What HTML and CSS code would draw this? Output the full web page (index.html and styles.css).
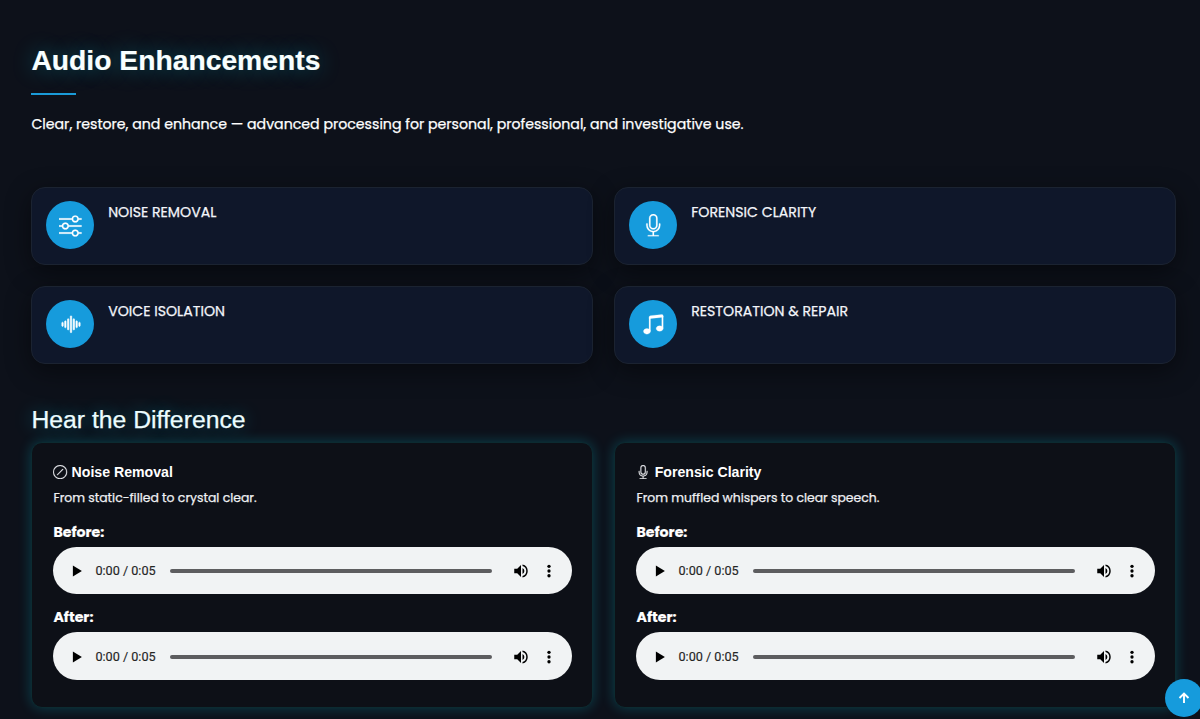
FILE: index.html
```html
<!DOCTYPE html>
<html lang="en">
<head>
<meta charset="utf-8">
<title>Audio Enhancements</title>
<link rel="stylesheet" href="styles.css">
</head>
<body>
<svg width="0" height="0" class="defs">
  <symbol id="mic" viewBox="0 0 16 16"><path d="M3.5 6.5A.5.5 0 0 1 4 7v1a4 4 0 0 0 8 0V7a.5.5 0 0 1 1 0v1a5 5 0 0 1-4.5 4.975V15h3a.5.5 0 0 1 0 1h-7a.5.5 0 0 1 0-1h3v-2.025A5 5 0 0 1 3 8V7a.5.5 0 0 1 .5-.5"/><path d="M10 8a2 2 0 1 1-4 0V3a2 2 0 1 1 4 0zM8 0a3 3 0 0 0-3 3v5a3 3 0 0 0 6 0V3a3 3 0 0 0-3-3"/></symbol>
  <symbol id="volume" viewBox="0 0 24 24"><path d="M3 9v6h4l5 5V4L7 9H3zm13.5 3A4.5 4.5 0 0 0 14 7.97v8.05A4.5 4.5 0 0 0 16.500 12zM14 3.230v2.060a7 7 0 0 1 0 13.420v2.060a9 9 0 0 0 0-17.540z"/></symbol>
  <symbol id="more" viewBox="0 0 24 24"><circle cx="12" cy="5.700" r="2.200"/><circle cx="12" cy="12" r="2.200"/><circle cx="12" cy="18.300" r="2.200"/></symbol>
  <symbol id="play" viewBox="0 0 24 24"><path d="M6.500 4.700v14.600l12-7.300z"/></symbol>
</svg>
<main class="page">
  <h1 class="title">Audio Enhancements</h1>
  <div class="rule"></div>
  <p class="lead">Clear, restore, and enhance — advanced processing for personal, professional, and investigative use.</p>

  <section class="features">
    <article class="feature">
      <span class="badge"><svg class="icon" viewBox="0 0 16 16"><path fill-rule="evenodd" d="M11.5 2a1.5 1.5 0 1 0 0 3 1.5 1.5 0 0 0 0-3M9.050 3a2.5 2.5 0 0 1 4.900 0H16v1h-2.050a2.5 2.5 0 0 1-4.900 0H0V3zM4.500 7a1.5 1.5 0 1 0 0 3 1.5 1.5 0 0 0 0-3M2.050 8a2.5 2.5 0 0 1 4.900 0H16v1H6.950a2.5 2.5 0 0 1-4.900 0H0V8zm9.450 4a1.5 1.5 0 1 0 0 3 1.5 1.5 0 0 0 0-3m-2.450 1a2.5 2.5 0 0 1 4.900 0H16v1h-2.050a2.5 2.5 0 0 1-4.900 0H0v-1z"/></svg></span>
      <span class="name">NOISE REMOVAL</span>
    </article>
    <article class="feature">
      <span class="badge"><svg class="icon"><use href="#mic"/></svg></span>
      <span class="name">FORENSIC CLARITY</span>
    </article>
    <article class="feature">
      <span class="badge"><svg class="icon wave" viewBox="0 0 16 16"><path d="M8.5 2a.5.5 0 0 1 .5.5v11a.5.5 0 0 1-1 0v-11a.5.5 0 0 1 .5-.5m-2 2a.5.5 0 0 1 .5.5v7a.5.5 0 0 1-1 0v-7a.5.5 0 0 1 .5-.5m4 0a.5.5 0 0 1 .5.5v7a.5.5 0 0 1-1 0v-7a.5.5 0 0 1 .5-.5m-6 1.500A.5.5 0 0 1 5 6v4a.5.5 0 0 1-1 0V6a.5.5 0 0 1 .5-.5m8 0a.5.5 0 0 1 .5.5v4a.5.5 0 0 1-1 0V6a.5.5 0 0 1 .5-.5m-10 1A.5.5 0 0 1 3 7v2a.5.5 0 0 1-1 0V7a.5.5 0 0 1 .5-.5m12 0a.5.5 0 0 1 .5.5v2a.5.5 0 0 1-1 0V7a.5.5 0 0 1 .5-.5"/></svg></span>
      <span class="name">VOICE ISOLATION</span>
    </article>
    <article class="feature">
      <span class="badge"><svg class="icon" viewBox="0 0 16 16"><path d="M6 13c0 1.105-1.120 2-2.500 2S1 14.105 1 13s1.120-2 2.500-2 2.500.896 2.500 2m9-2c0 1.105-1.120 2-2.500 2s-2.500-.895-2.500-2 1.120-2 2.500-2 2.500.895 2.500 2"/><path d="M14 11V2h1v9zM6 3v10H5V3z"/><path d="M5 2.905a1 1 0 0 1 .9-.995l8-.8a1 1 0 0 1 1.100.995V3L5 4z"/></svg></span>
      <span class="name">RESTORATION &amp; REPAIR</span>
    </article>
  </section>

  <h2 class="subtitle">Hear the Difference</h2>
  <section class="demos">
    <article class="demo">
      <h3 class="demo-title"><svg viewBox="0 0 16 16"><path d="M8 15A7 7 0 1 1 8 1a7 7 0 0 1 0 14m0 1A8 8 0 1 0 8 0a8 8 0 0 0 0 16"/><path d="M11.354 4.646a.5.5 0 0 0-.708 0l-6 6a.5.5 0 0 0 .708.708l6-6a.5.5 0 0 0 0-.708"/></svg><span>Noise Removal</span></h3>
      <p class="desc">From static-filled to crystal clear.</p>
      <p class="label before">Before:</p>
      <div class="player"><svg class="play"><use href="#play"/></svg><span class="time">0:00 / 0:05</span><span class="track"></span><svg class="vol"><use href="#volume"/></svg><svg class="more"><use href="#more"/></svg></div>
      <p class="label after">After:</p>
      <div class="player"><svg class="play"><use href="#play"/></svg><span class="time">0:00 / 0:05</span><span class="track"></span><svg class="vol"><use href="#volume"/></svg><svg class="more"><use href="#more"/></svg></div>
    </article>
    <article class="demo">
      <h3 class="demo-title"><svg><use href="#mic"/></svg><span>Forensic Clarity</span></h3>
      <p class="desc">From muffled whispers to clear speech.</p>
      <p class="label before">Before:</p>
      <div class="player"><svg class="play"><use href="#play"/></svg><span class="time">0:00 / 0:05</span><span class="track"></span><svg class="vol"><use href="#volume"/></svg><svg class="more"><use href="#more"/></svg></div>
      <p class="label after">After:</p>
      <div class="player"><svg class="play"><use href="#play"/></svg><span class="time">0:00 / 0:05</span><span class="track"></span><svg class="vol"><use href="#volume"/></svg><svg class="more"><use href="#more"/></svg></div>
    </article>
  </section>
</main>
<a class="to-top" href="#"><svg viewBox="0 0 12 12"><path d="M6 11V1.500M1.500 6 6 1.500 10.500 6"/></svg></a>
</body>
</html>
```
FILE: styles.css
```css
* { box-sizing: border-box; }
html, body { margin: 0; height: 719px; overflow: hidden; }
body {
  background: #0d111a;
  color: #fff;
  font-family: Poppins, Inter, sans-serif;
  font-size: 14.15px;
}
h1, h2, h3, p { margin: 0; }
svg { fill: currentColor; flex: none; display: block; }
.defs { position: absolute; }
.page { padding: 42px 23.6px 0 31.4px; }
.title {
  font: bold 28.27px/37px "Liberation Sans", Arial, sans-serif;
  color: #f8ffff;
  text-shadow: 0 0 21px rgba(0, 229, 255, .35);
  -webkit-text-stroke: .2px currentColor;
  white-space: nowrap;
}
.rule { width: 45px; height: 2.4px; margin-top: 13.6px; background: #1a9bd8; }
.lead { margin-top: 18px; line-height: 22px; white-space: nowrap; }
.lead, .name, .desc, .subtitle { -webkit-text-stroke: .25px currentColor; }
.features, .demos { display: grid; grid-template-columns: 1fr 1fr; column-gap: 21.2px; }
.features { margin-top: 52px; row-gap: 21px; }
.feature {
  display: flex;
  gap: 13.8px;
  height: 78px;
  padding: 13.4px 13.95px;
  border: 1px solid #1b2331;
  border-radius: 14px;
  background: #0f172a;
  box-shadow: 0 7px 26px rgba(0, 0, 0, .45);
}
.badge {
  display: grid;
  place-items: center;
  flex: none;
  width: 48px;
  height: 48px;
  border-radius: 50%;
  background: #169bdc;
}
.icon { width: 22.6px; height: 22.6px; stroke: currentColor; stroke-width: .15px; }
.wave { stroke-width: .4px; }
.name { padding-top: .6px; line-height: 21px; white-space: nowrap; color: #f3f5fa; }
.subtitle {
  margin-top: 39px;
  font: normal 24.75px/34px "Liberation Sans", Arial, sans-serif;
  color: #ecfdff;
  text-shadow: 0 0 18px rgba(0, 229, 255, .4);
}
.demos { margin-top: 5px; }
.demo {
  height: 266px;
  padding: 19px 20.5px 0 21px;
  border: 1px solid #0c2b31;
  border-radius: 11px;
  background: #0d1017;
  box-shadow: 0 0 13px rgba(0, 229, 255, .23);
}
.demo-title {
  display: flex;
  align-items: center;
  gap: 4px;
  height: 20px;
  font: bold 14.14px/20px "Liberation Sans", Arial, sans-serif;
}
.demo-title svg { width: 14.2px; height: 14.2px; color: #e8eaee; stroke: currentColor; stroke-width: .25px; }
.desc { margin-top: 6px; font-size: 12.4px; line-height: 20px; color: #f0f1f4; white-space: nowrap; }
.label { font-weight: 700; line-height: 20px; -webkit-text-stroke: .2px currentColor; }
.before { margin-top: 14px; }
.after { margin-top: 13.5px; }
.player {
  display: flex;
  align-items: center;
  height: 47px;
  margin-top: 5px;
  padding: 1px 14.3px 0 15px;
  border-radius: 24px;
  background: #f1f3f4;
  color: #000;
}
.after + .player { height: 48px; }
.play { width: 18px; height: 18px; }
.time { width: 75px; margin-left: 9px; font: 12.65px/18px Roboto, sans-serif; color: #252525; -webkit-text-stroke: .15px currentColor; white-space: nowrap; }
.track { flex: 1; height: 4px; border-radius: 2px; background: #5d5d5f; }
.vol { width: 18px; height: 18px; margin-left: 20px; }
.more { width: 18px; height: 18px; margin-left: 10px; }
.to-top {
  position: fixed;
  left: 1165px;
  top: 679px;
  width: 38px;
  height: 38px;
  display: grid;
  place-items: center;
  border-radius: 50%;
  background: #169bdc;
  color: #fff;
}
.to-top svg { width: 12px; height: 12px; fill: none; stroke: currentColor; stroke-width: 1.900; }
```
